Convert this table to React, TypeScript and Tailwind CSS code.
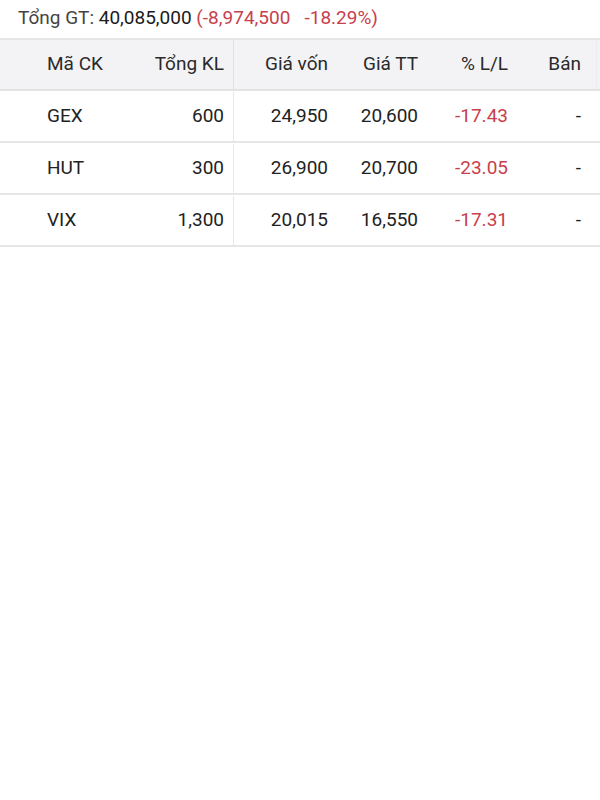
import React from "react";

const rows = [
  { ma: "GEX", kl: "600", von: "24,950", tt: "20,600", pct: "-17.43", ban: "-" },
  { ma: "HUT", kl: "300", von: "26,900", tt: "20,700", pct: "-23.05", ban: "-" },
  { ma: "VIX", kl: "1,300", von: "20,015", tt: "16,550", pct: "-17.31", ban: "-" },
];

export default function App() {
  return (
    <div className="w-[600px] h-[800px] bg-white text-[19px] text-[#222]" style={{ fontFamily: "Roboto, 'Noto Sans', sans-serif" }}>
      <div className="h-[38px] flex items-center pl-[18px] pb-[1px]">
        <span className="text-[#444]">Tổng GT:&nbsp;</span>
        <span className="text-[#1a1a1a]">40,085,000</span>
        <span className="text-[#c8404c]">&nbsp;(-8,974,500&nbsp;&nbsp;&nbsp;-18.29%)</span>
      </div>
      <div className="border-t-2 border-[#e6e6e8]">
        <div className="flex h-[51px] items-center bg-[#f3f3f5] border-b-2 border-[#e3e3e5] text-[#2a2a2a]">
          <div className="w-[120px] pl-[47px]">Mã CK</div>
          <div className="w-[114px] pr-[9px] text-right h-full flex items-center justify-end border-r border-[#e0e0e2]">Tổng KL</div>
          <div className="w-[103px] pr-[9px] text-right">Giá vốn</div>
          <div className="w-[90px] pr-[9px] text-right">Giá TT</div>
          <div className="w-[90px] pr-[9px] text-right">% L/L</div>
          <div className="w-[80px] pr-[15px] text-right h-full flex items-center justify-end border-r border-[#ececee]">Bán</div>
        </div>
        {rows.map((r) => (
          <div key={r.ma} className="flex h-[52px] items-center border-b-2 border-[#e6e6e8] pt-[1px]">
            <div className="w-[120px] pl-[47px]">{r.ma}</div>
            <div className="w-[114px] pr-[9px] h-full flex items-center justify-end border-r border-[#e6e6e8]">{r.kl}</div>
            <div className="w-[103px] pr-[9px] text-right">{r.von}</div>
            <div className="w-[90px] pr-[9px] text-right">{r.tt}</div>
            <div className="w-[90px] pr-[9px] text-right text-[#c8404c]">{r.pct}</div>
            <div className="w-[80px] pr-[16px] text-right">{r.ban}</div>
          </div>
        ))}
      </div>
    </div>
  );
}
